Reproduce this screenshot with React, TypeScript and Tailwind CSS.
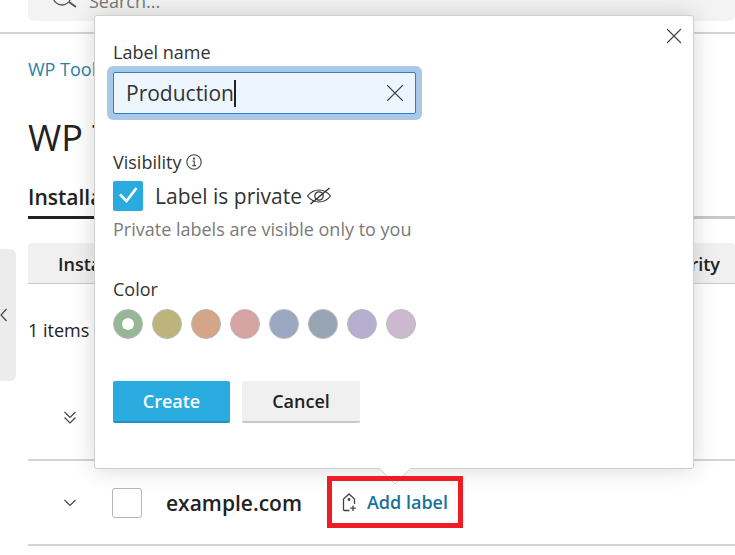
import React from "react";
import { X } from "lucide-react";

const swatches = ["#96b696", "#bcb47a", "#d2a686", "#d7a4a4", "#9aa8c2", "#97a4b4", "#b5aece", "#cdb9cf"];

function Caret({ d, className }: { d: string; className?: string }) {
  return (
    <svg width="14" height="16" viewBox="0 0 14 16" fill="none" stroke="#444" strokeWidth="1.2" className={className}>
      <path d={d} />
    </svg>
  );
}

export default function App() {
  return (
    <div className="relative h-[555px] w-[735px] overflow-hidden bg-white font-['Open_Sans',sans-serif] text-[#222]">
      {/* Top bar */}
      <header className="h-[34px] border-b-2 border-[#d4d4d4] pl-[28px]">
        <div className="flex h-[21px] items-start gap-[11px] rounded-b-md bg-[#f3f3f3] pl-[24px]">
          <svg width="26" height="26" viewBox="0 0 26 26" fill="none" stroke="#555" strokeWidth="1.3" className="-mt-[17px] shrink-0">
            <circle cx="10" cy="13" r="9" />
            <path d="M17 19l7 5" strokeWidth="2" />
          </svg>
          <span className="-mt-[9px] text-[18px] leading-[20px] text-[#777]">Search...</span>
        </div>
      </header>

      <div className="flex">
        {/* Sidebar toggle */}
        <div className="mt-[215px] flex h-[132px] w-[16px] shrink-0 items-center rounded-r-md bg-[#ececec]">
          <Caret d="M6.5 2L1 8L6.5 14" />
        </div>

        <main className="ml-[12px] min-w-0 flex-1">
          <div className="mt-[24px] text-[18px] leading-[22px] text-[#1f84a8]">WP Toolkit</div>
          <h1 className="mt-[35px] text-[36px] font-normal leading-[46px] text-[#222]">WP Toolkit</h1>

          <div className="mt-[22px] flex h-[36px] border-b-[3px] border-[#c8c8c8]">
            <div className="-mb-[3px] border-b-[3px] border-[#222] text-[21px] font-semibold leading-[28px]">
              Installations
            </div>
          </div>

          <div className="mt-[24px] flex h-[41px] items-center justify-between rounded-t-sm border-b border-[#ccc] bg-[#f0f0f0] pl-[30px] pr-[15px] pt-[3px] text-[18px] font-semibold">
            <span>Installations</span>
            <span>Security</span>
          </div>

          <div className="mt-[35px] text-[18px] leading-[22px]">1 items</div>

          <div className="flex h-[120px] items-start border-b-2 border-[#d4d4d4] pl-[35px] pt-[69px]">
            <Caret d="M1.5 2L7 7.5L12.5 2M1.5 7.5L7 13L12.5 7.5" />
          </div>

          <div className="flex h-[85px] items-center border-b-2 border-[#d4d4d4] pl-[35px]">
            <Caret d="M1.5 5L7 10.5L12.5 5" />
            <div className="ml-[35px] h-[30px] w-[30px] rounded-[3px] border border-[#b5b5b5] bg-white" />
            <div className="ml-[24px] text-[21px] font-semibold leading-[28px]">example.com</div>
            <div className="relative z-10 -mt-[1px] ml-[25px] flex h-[52px] w-[136px] shrink-0 items-center border-[5px] border-[#ee1c25] pl-[10px]">
              <svg width="16" height="19" viewBox="0 0 16 19" fill="none" stroke="#444" strokeWidth="1.3" className="shrink-0">
                <path d="M7.5 17.5H2.5A1 1 0 0 1 1.5 16.5V6L7 1L12.5 6V11" />
                <circle cx="7" cy="6.5" r="0.8" fill="#444" />
                <path d="M11 12.5v5.5M8.2 15.2h5.6" />
              </svg>
              <span className="ml-[9px] whitespace-nowrap text-[18px] font-semibold leading-[22px] text-[#1b7196]">Add label</span>
            </div>
          </div>
        </main>
      </div>

      {/* Popover */}
      <div className="absolute left-[94px] top-[15px] h-[454px] w-[600px] rounded-[3px] border border-[#cfcfcf] bg-white pl-[18px] pt-[25px] shadow-[0_0_24px_rgba(0,0,0,0.16)]">
        <button className="absolute right-[6px] top-[7px] text-[#444]">
          <X size={26} strokeWidth={1.1} />
        </button>

        <div className="text-[18px] leading-[22px] text-[#333]">Label name</div>
        <div className="relative mt-[9px] flex h-[42px] w-[303px] items-center rounded-[2px] border border-[#2f7fc8] bg-[#edf5fe] pl-[12px] shadow-[0_0_0_6px_#a9c9e8]">
          <span className="text-[21px] leading-[28px] text-[#333]">Production</span>
          <span className="h-[27px] w-[2px] bg-[#222]" />
          <X size={30} strokeWidth={0.9} className="absolute right-[5px] top-[5px] text-[#444]" />
        </div>

        <div className="mt-[37px] flex items-center gap-[5px] text-[18px] leading-[22px] text-[#333]">
          <span>Visibility</span>
          <svg width="16" height="16" viewBox="0 0 16 16" fill="none" stroke="#444" strokeWidth="1.1">
            <circle cx="8" cy="8" r="7.2" />
            <path d="M6.5 7H8.2V11.6M6.3 11.6H10" />
            <circle cx="8" cy="4.6" r="0.6" fill="#444" />
          </svg>
        </div>

        <div className="mt-[8px] flex items-center">
          <div className="flex h-[30px] w-[30px] items-center justify-center rounded-[2px] bg-[#29abe0]">
            <svg width="20" height="20" viewBox="0 0 20 20" fill="none" stroke="#fff" strokeWidth="2.6">
              <path d="M2 8.5L8.5 15L18.5 2" />
            </svg>
          </div>
          <span className="ml-[12px] text-[21px] leading-[28px] text-[#333]">Label is private</span>
          <svg width="26" height="22" viewBox="0 0 26 22" fill="none" stroke="#333" strokeWidth="1.2" className="ml-[4px]">
            <path d="M1.5 11C5 6.5 9 5 13 5C17 5 21 6.5 24.5 11C21 15.5 17 17 13 17C9 17 5 15.5 1.5 11Z" />
            <circle cx="13" cy="11" r="4.2" />
            <path d="M4.5 19L23.5 3" strokeWidth="1.5" />
          </svg>
        </div>

        <div className="mt-[7px] text-[18px] leading-[22px] text-[#7a7a7a]">Private labels are visible only to you</div>

        <div className="mt-[38px] text-[18px] leading-[22px] text-[#333]">Color</div>
        <div className="mt-[9px] flex gap-[9px]">
          {swatches.map((c, i) => (
            <div
              key={c}
              className="flex h-[30px] w-[30px] items-center justify-center rounded-full border border-[#bbb]"
              style={{ backgroundColor: c }}
            >
              {i === 0 && <div className="h-[12px] w-[12px] rounded-full bg-white" />}
            </div>
          ))}
        </div>

        <div className="mt-[42px] flex gap-[12px]">
          <button className="h-[42px] w-[117px] rounded-[2px] border-b-2 border-[#2191c0] bg-[#29abe0] text-[18px] font-semibold text-white">
            Create
          </button>
          <button className="h-[42px] w-[118px] rounded-[2px] border-b-2 border-[#c8c8c8] bg-[#f0f0f0] text-[18px] font-semibold text-[#222]">
            Cancel
          </button>
        </div>

        {/* Arrow */}
        <div className="absolute left-[288px] top-[440px] h-[24px] w-[24px] rotate-45 rounded-br-[2px] border-b border-r border-[#cfcfcf] bg-white" />
      </div>
    </div>
  );
}
